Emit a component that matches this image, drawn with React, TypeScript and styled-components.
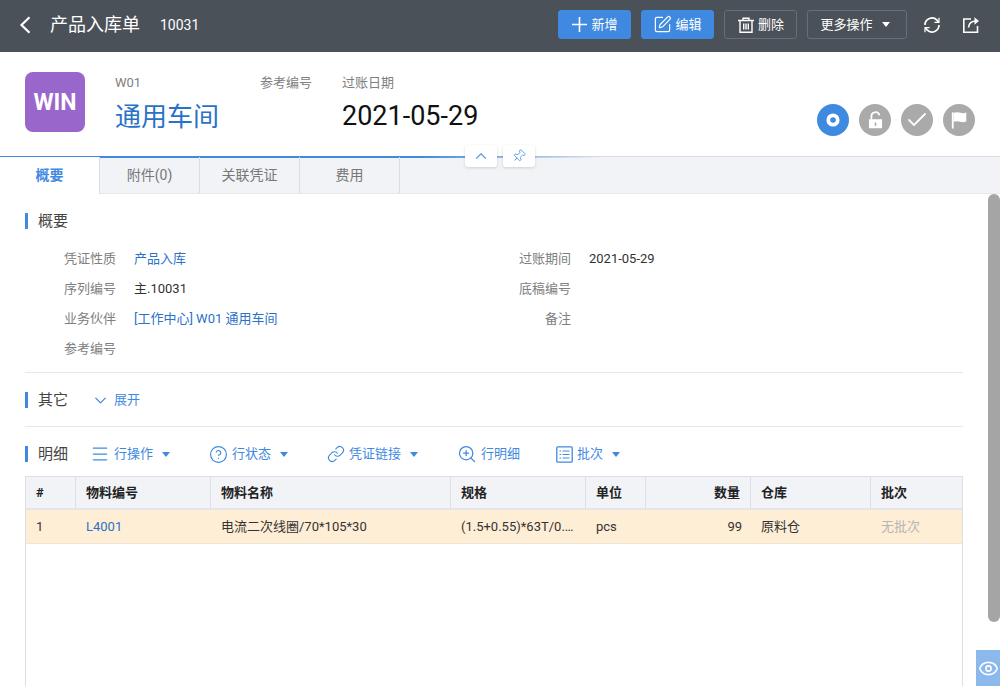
import React from "react";
import styled, { createGlobalStyle } from "styled-components";
import { Check, ChevronDown, ChevronUp, CircleHelp, Eye, Link, Menu, Pin, SquarePen, ZoomIn } from "lucide-react";

const GlobalStyle = createGlobalStyle`
  html, body {
    margin: 0;
    padding: 0;
    height: 100%;
    overflow: hidden;
    background: #fff;
    font-family: Roboto, "Noto Sans CJK SC", sans-serif;
    line-height: 20px;
    color: #333;
  }
  * { box-sizing: border-box; }
`;

const BackIcon = () => (
  <svg width="12" height="18" viewBox="0 0 12 18" fill="none" stroke="currentColor" strokeWidth="2.2">
    <path d="M10.500 1.200 2.500 9l8 7.800" />
  </svg>
);

const PlusIcon = () => (
  <svg width="17" height="17" viewBox="0 0 17 17" fill="none" stroke="currentColor" strokeWidth="1.6">
    <path d="M1 8.500h15M8.500 1v15" />
  </svg>
);

const TrashIcon = () => (
  <svg width="18" height="18" viewBox="0 0 18 18" fill="none" stroke="currentColor" strokeWidth="1.4">
    <path d="M1 4.500h16M6 4.500V2.200h6v2.300M3 4.500v11.800h12V4.500M6.700 7.500v6M9 7.500v6M11.300 7.500v6" />
  </svg>
);

const SyncIcon = () => (
  <svg width="18" height="18" viewBox="0 0 18 18" fill="none" stroke="currentColor" strokeWidth="1.7">
    <path d="M2 9a7 7 0 0 1 12-4.900L15.500 6M16 9a7 7 0 0 1-12 4.900L2.500 12" />
    <path d="M16 1.800V6.400h-4.600M2 16.200v-4.600h4.600" strokeWidth="1.200" />
  </svg>
);

const ShareIcon = () => (
  <svg width="18" height="18" viewBox="0 0 18 18" fill="none" stroke="currentColor" strokeWidth="1.6">
    <path d="M9 3H1.800v13.200H15.500V10" />
    <path d="M6.500 11.500c.3-4 3-6.500 8-6.500" />
    <path d="M12.500 1.800 16.500 5l-4 3.200" fill="currentColor" strokeWidth="0.8" />
  </svg>
);

const RecordIcon = () => (
  <svg width="16" height="16" viewBox="0 0 16 16" fill="none" stroke="#fff" strokeWidth="3.800">
    <circle cx="8" cy="8" r="4.700" />
  </svg>
);

const LockIcon = () => (
  <svg width="15" height="18" viewBox="0 0 18 22">
    <path d="M4 10V6.500a5 5 0 0 1 9.800-1.400" fill="none" stroke="#fff" strokeWidth="2.200" />
    <path d="M1 10h16v11H1z M8 14v4h2v-4z" fill="#fff" fillRule="evenodd" />
  </svg>
);

const FlagIcon = () => (
  <svg width="17" height="18" viewBox="0 0 18 20">
    <path d="M1.500 1.500v18" stroke="#fff" strokeWidth="2" />
    <path d="M2.500 2c3.500-1.200 5.500-.6 7.500 0s4 .6 6.500-.2v10c-2.500.8-4.500.8-6.500.2s-4-1.100-7.500 0z" fill="#fff" />
  </svg>
);

const BatchIcon = () => (
  <svg width="17" height="17" viewBox="0 0 17 17" fill="none" stroke="currentColor" strokeWidth="1.300">
    <rect x="0.800" y="0.800" width="15.400" height="15.400" rx="1" />
    <path d="M3.500 5h1.500M6.500 5h7M3.500 8.500h1.500M6.500 8.500h7M3.500 12h1.500M6.500 12h7" strokeWidth="1" />
  </svg>
);

const Page = styled.div`
  position: relative;
  width: 1000px;
  height: 686px;
  overflow: hidden;
  display: flex;
  flex-direction: column;
`;

const TopBar = styled.header`
  height: 52px;
  flex: none;
  background: #4b5158;
  color: #fff;
  display: flex;
  align-items: center;
  padding: 0 20px 3px 19px;
`;

const BackButton = styled.span`
  display: flex;
  width: 31px;
`;

const PageTitle = styled.h1`
  margin: 0;
  font-size: 18px;
  font-weight: 400;
  line-height: 26px;
`;

const DocNumber = styled.span`
  margin-left: 20px;
  font-size: 14px;
`;

const TopActions = styled.div`
  margin-left: auto;
  display: flex;
  align-items: center;
  gap: 10px;
`;

const TopButton = styled.button<{ $primary?: boolean; $more?: boolean }>`
  width: ${(p) => (p.$more ? 100 : 73)}px;
  height: 29px;
  padding: 0 ${(p) => (p.$more ? 4 : 0)}px 0 0;
  display: flex;
  align-items: center;
  justify-content: center;
  gap: 3px;
  border-radius: 3px;
  border: 1px solid ${(p) => (p.$primary ? "#3f8ae0" : "#666e78")};
  background: ${(p) => (p.$primary ? "#3f8ae0" : "transparent")};
  color: #fff;
  font: inherit;
  font-size: 13px;
`;

const Caret = styled.i<{ $color?: string }>`
  display: inline-block;
  margin-left: 6px;
  border-style: solid;
  border-width: 5px 4.500px 0;
  border-color: ${(p) => p.$color ?? "#fff"} transparent transparent;
`;

const TopIcon = styled.span`
  display: flex;
  margin-left: 16px;
  & + & {
    margin-left: 21px;
  }
`;

const Summary = styled.section`
  height: 104px;
  flex: none;
  display: flex;
  padding: 20px 25px 0;
`;

const Avatar = styled.div`
  width: 60px;
  height: 60px;
  flex: none;
  padding-top: 2px;
  border-radius: 8px;
  background: #9966cc;
  color: #fff;
  font-size: 23px;
  font-weight: 700;
  display: flex;
  align-items: center;
  justify-content: center;
`;

const SummaryColumn = styled.div<{ $width: number; $left?: number }>`
  width: ${(p) => p.$width}px;
  margin-left: ${(p) => p.$left ?? 0}px;
  flex: none;
`;

const SummaryLabel = styled.div`
  font-size: 13px;
  line-height: 22px;
  color: #808080;
`;

const PartnerName = styled.div`
  margin-top: 5px;
  font-size: 26px;
  line-height: 36px;
  color: #2a72c8;
`;

const PostDate = styled.div`
  margin-top: 4px;
  font-size: 27px;
  line-height: 36px;
  color: #111;
`;

const StatusGroup = styled.div`
  margin-left: auto;
  padding-top: 32px;
  display: flex;
  gap: 10px;
`;

const StatusDot = styled.span<{ $active?: boolean }>`
  width: 32px;
  height: 32px;
  border-radius: 50%;
  background: ${(p) => (p.$active ? "#3d8ae0" : "#aaaaaa")};
  color: #fff;
  display: flex;
  align-items: center;
  justify-content: center;
`;

const TabBar = styled.nav`
  position: relative;
  height: 38px;
  flex: none;
  display: flex;
  background: #f1f3f7;
  border-top: 1px solid #d8dce6;
  border-bottom: 1px solid #e6e8ee;
  &::before {
    content: "";
    position: absolute;
    top: -1px;
    left: 0;
    width: 600px;
    height: 2px;
    background: linear-gradient(90deg, #3f8ae0 0%, #3f8ae0 70%, rgba(63, 138, 224, 0) 100%);
  }
`;

const Tab = styled.div<{ $active?: boolean }>`
  position: relative;
  width: 100px;
  height: ${(p) => (p.$active ? 37 : 36)}px;
  padding-bottom: ${(p) => (p.$active ? 1 : 0)}px;
  display: flex;
  align-items: center;
  justify-content: center;
  font-size: 14px;
  font-weight: ${(p) => (p.$active ? 700 : 400)};
  color: ${(p) => (p.$active ? "#3f8ae0" : "#777")};
  background: ${(p) => (p.$active ? "#fff" : "transparent")};
  border-right: 1px solid #d8dce6;
`;

const FloatGroup = styled.div`
  position: absolute;
  left: 465px;
  top: -12px;
  display: flex;
  gap: 6px;
`;

const FloatButton = styled.span`
  width: 32px;
  height: 22px;
  border-radius: 3px;
  background: #fff;
  box-shadow: 0 1px 3px rgba(0, 0, 0, 0.15);
  color: #5c9ce6;
  display: flex;
  align-items: center;
  justify-content: center;
`;

const TiltedPin = styled(Pin)`
  transform: rotate(45deg);
`;

const Content = styled.main`
  flex: 1;
  min-height: 0;
  display: flex;
  flex-direction: column;
  padding: 0 37px 0 25px;
`;

const SectionHead = styled.div<{ $top: number }>`
  display: flex;
  align-items: center;
  height: 22px;
  margin-top: ${(p) => p.$top}px;
`;

const SectionTitle = styled.h2`
  margin: 0;
  padding-left: 10px;
  border-left: 3px solid #3f8ae0;
  font-size: 15px;
  font-weight: 400;
  line-height: 16px;
  color: #444;
`;

const FieldGrid = styled.div`
  display: grid;
  grid-template-columns: 91px 364px 91px 1fr;
  grid-auto-rows: 30px;
  margin-top: 12px;
  align-items: center;
  font-size: 13px;
`;

const FieldLabel = styled.div`
  text-align: right;
  color: #808080;
`;

const FieldValue = styled.div<{ $link?: boolean }>`
  padding-left: 18px;
  color: ${(p) => (p.$link ? "#2a72c8" : "#333")};
`;

const Divider = styled.hr<{ $top: number }>`
  width: 100%;
  height: 1px;
  margin: ${(p) => p.$top}px 0 0;
  border: none;
  background: #e8e8e8;
`;

const ActionLink = styled.span<{ $left: number }>`
  display: flex;
  align-items: center;
  gap: 4px;
  margin-left: ${(p) => p.$left}px;
  font-size: 13px;
  color: #3f8ae0;
  ${Caret} {
    margin-left: 5px;
  }
`;

const Table = styled.div`
  flex: 1;
  margin-top: 11px;
  border: 1px solid #dcdfe6;
  border-bottom: none;
  font-size: 13px;
`;

const columns = "50px 135px 240px 135px 60px 105px 120px 1fr";

const HeadRow = styled.div`
  display: grid;
  grid-template-columns: ${columns};
  height: 33px;
  background: #f1f3f7;
  border-bottom: 2px solid #e3e5ea;
  color: #222;
  font-weight: 700;
`;

const HeadCell = styled.div<{ $right?: boolean; $last?: boolean }>`
  display: flex;
  align-items: center;
  justify-content: ${(p) => (p.$right ? "flex-end" : "flex-start")};
  padding: 0 10px;
  border-right: ${(p) => (p.$last ? "none" : "1px solid #dcdfe6")};
`;

const BodyRow = styled.div`
  display: grid;
  grid-template-columns: ${columns};
  height: 34px;
  background: #ffeed6;
  border-bottom: 1px solid #f0e6d6;
  color: #333;
`;

const BodyCell = styled.div<{ $right?: boolean; $tone?: string }>`
  display: flex;
  align-items: center;
  justify-content: ${(p) => (p.$right ? "flex-end" : "flex-start")};
  padding: 1px ${(p) => (p.$right ? 9 : 10)}px 0 10px;
  color: ${(p) => p.$tone ?? "inherit"};
  white-space: nowrap;
`;

const ScrollThumb = styled.div`
  position: absolute;
  right: 0;
  top: 194px;
  width: 12px;
  height: 428px;
  border-radius: 6px;
  background: #a5a5a5;
`;

const EyeTab = styled.div`
  position: absolute;
  right: 0;
  bottom: 0;
  width: 24px;
  height: 36px;
  background: #8bb9ec;
  color: #fff;
  display: flex;
  align-items: center;
  justify-content: center;
`;

const headers = ["#", "物料编号", "物料名称", "规格", "单位", "数量", "仓库", "批次"];

export default function App() {
  return (
    <>
      <GlobalStyle />
      <Page>
        <TopBar>
          <BackButton>
            <BackIcon />
          </BackButton>
          <PageTitle>产品入库单</PageTitle>
          <DocNumber>10031</DocNumber>
          <TopActions>
            <TopButton $primary>
              <PlusIcon />
              新增
            </TopButton>
            <TopButton $primary>
              <SquarePen size={19} strokeWidth={1.5} />
              编辑
            </TopButton>
            <TopButton>
              <TrashIcon />
              删除
            </TopButton>
            <TopButton $more>
              更多操作
              <Caret />
            </TopButton>
          </TopActions>
          <TopIcon>
            <SyncIcon />
          </TopIcon>
          <TopIcon>
            <ShareIcon />
          </TopIcon>
        </TopBar>

        <Summary>
          <Avatar>WIN</Avatar>
          <SummaryColumn $width={145} $left={30}>
            <SummaryLabel>W01</SummaryLabel>
            <PartnerName>通用车间</PartnerName>
          </SummaryColumn>
          <SummaryColumn $width={82}>
            <SummaryLabel>参考编号</SummaryLabel>
          </SummaryColumn>
          <SummaryColumn $width={200}>
            <SummaryLabel>过账日期</SummaryLabel>
            <PostDate>2021-05-29</PostDate>
          </SummaryColumn>
          <StatusGroup>
            <StatusDot $active>
              <RecordIcon />
            </StatusDot>
            <StatusDot>
              <LockIcon />
            </StatusDot>
            <StatusDot>
              <Check size={24} strokeWidth={1.8} />
            </StatusDot>
            <StatusDot>
              <FlagIcon />
            </StatusDot>
          </StatusGroup>
        </Summary>

        <TabBar>
          <Tab $active>概要</Tab>
          <Tab>附件(0)</Tab>
          <Tab>关联凭证</Tab>
          <Tab>费用</Tab>
          <FloatGroup>
            <FloatButton>
              <ChevronUp size={18} strokeWidth={1.5} />
            </FloatButton>
            <FloatButton>
              <TiltedPin size={14} strokeWidth={1.6} />
            </FloatButton>
          </FloatGroup>
        </TabBar>

        <Content>
          <SectionHead $top={16}>
            <SectionTitle>概要</SectionTitle>
          </SectionHead>
          <FieldGrid>
            <FieldLabel>凭证性质</FieldLabel>
            <FieldValue $link>产品入库</FieldValue>
            <FieldLabel>过账期间</FieldLabel>
            <FieldValue>2021-05-29</FieldValue>
            <FieldLabel>序列编号</FieldLabel>
            <FieldValue>主.10031</FieldValue>
            <FieldLabel>底稿编号</FieldLabel>
            <FieldValue />
            <FieldLabel>业务伙伴</FieldLabel>
            <FieldValue $link>[工作中心] W01 通用车间</FieldValue>
            <FieldLabel>备注</FieldLabel>
            <FieldValue />
            <FieldLabel>参考编号</FieldLabel>
            <FieldValue />
          </FieldGrid>
          <Divider $top={8} />
          <SectionHead $top={16}>
            <SectionTitle>其它</SectionTitle>
            <ActionLink $left={23}>
              <ChevronDown size={19} strokeWidth={1.6} />
              展开
            </ActionLink>
          </SectionHead>
          <Divider $top={15} />
          <SectionHead $top={16}>
            <SectionTitle>明细</SectionTitle>
            <ActionLink $left={22}>
              <Menu size={20} strokeWidth={1.5} />
              行操作
              <Caret $color="#3f8ae0" />
            </ActionLink>
            <ActionLink $left={39}>
              <CircleHelp size={19} strokeWidth={1.5} />
              行状态
              <Caret $color="#3f8ae0" />
            </ActionLink>
            <ActionLink $left={39}>
              <Link size={18} strokeWidth={1.5} />
              凭证链接
              <Caret $color="#3f8ae0" />
            </ActionLink>
            <ActionLink $left={39}>
              <ZoomIn size={20} strokeWidth={1.5} />
              行明细
            </ActionLink>
            <ActionLink $left={36}>
              <BatchIcon />
              批次
              <Caret $color="#3f8ae0" />
            </ActionLink>
          </SectionHead>
          <Table>
            <HeadRow>
              {headers.map((h, i) => (
                <HeadCell key={h} $right={h === "数量"} $last={i === headers.length - 1}>
                  {h}
                </HeadCell>
              ))}
            </HeadRow>
            <BodyRow>
              <BodyCell>1</BodyCell>
              <BodyCell $tone="#2a72c8">L4001</BodyCell>
              <BodyCell>电流二次线圈/70*105*30</BodyCell>
              <BodyCell>(1.5+0.55)*63T/0.…</BodyCell>
              <BodyCell>pcs</BodyCell>
              <BodyCell $right>99</BodyCell>
              <BodyCell>原料仓</BodyCell>
              <BodyCell $tone="#b5b5b5">无批次</BodyCell>
            </BodyRow>
          </Table>
        </Content>

        <ScrollThumb />
        <EyeTab>
          <Eye size={21} strokeWidth={1.8} />
        </EyeTab>
      </Page>
    </>
  );
}
